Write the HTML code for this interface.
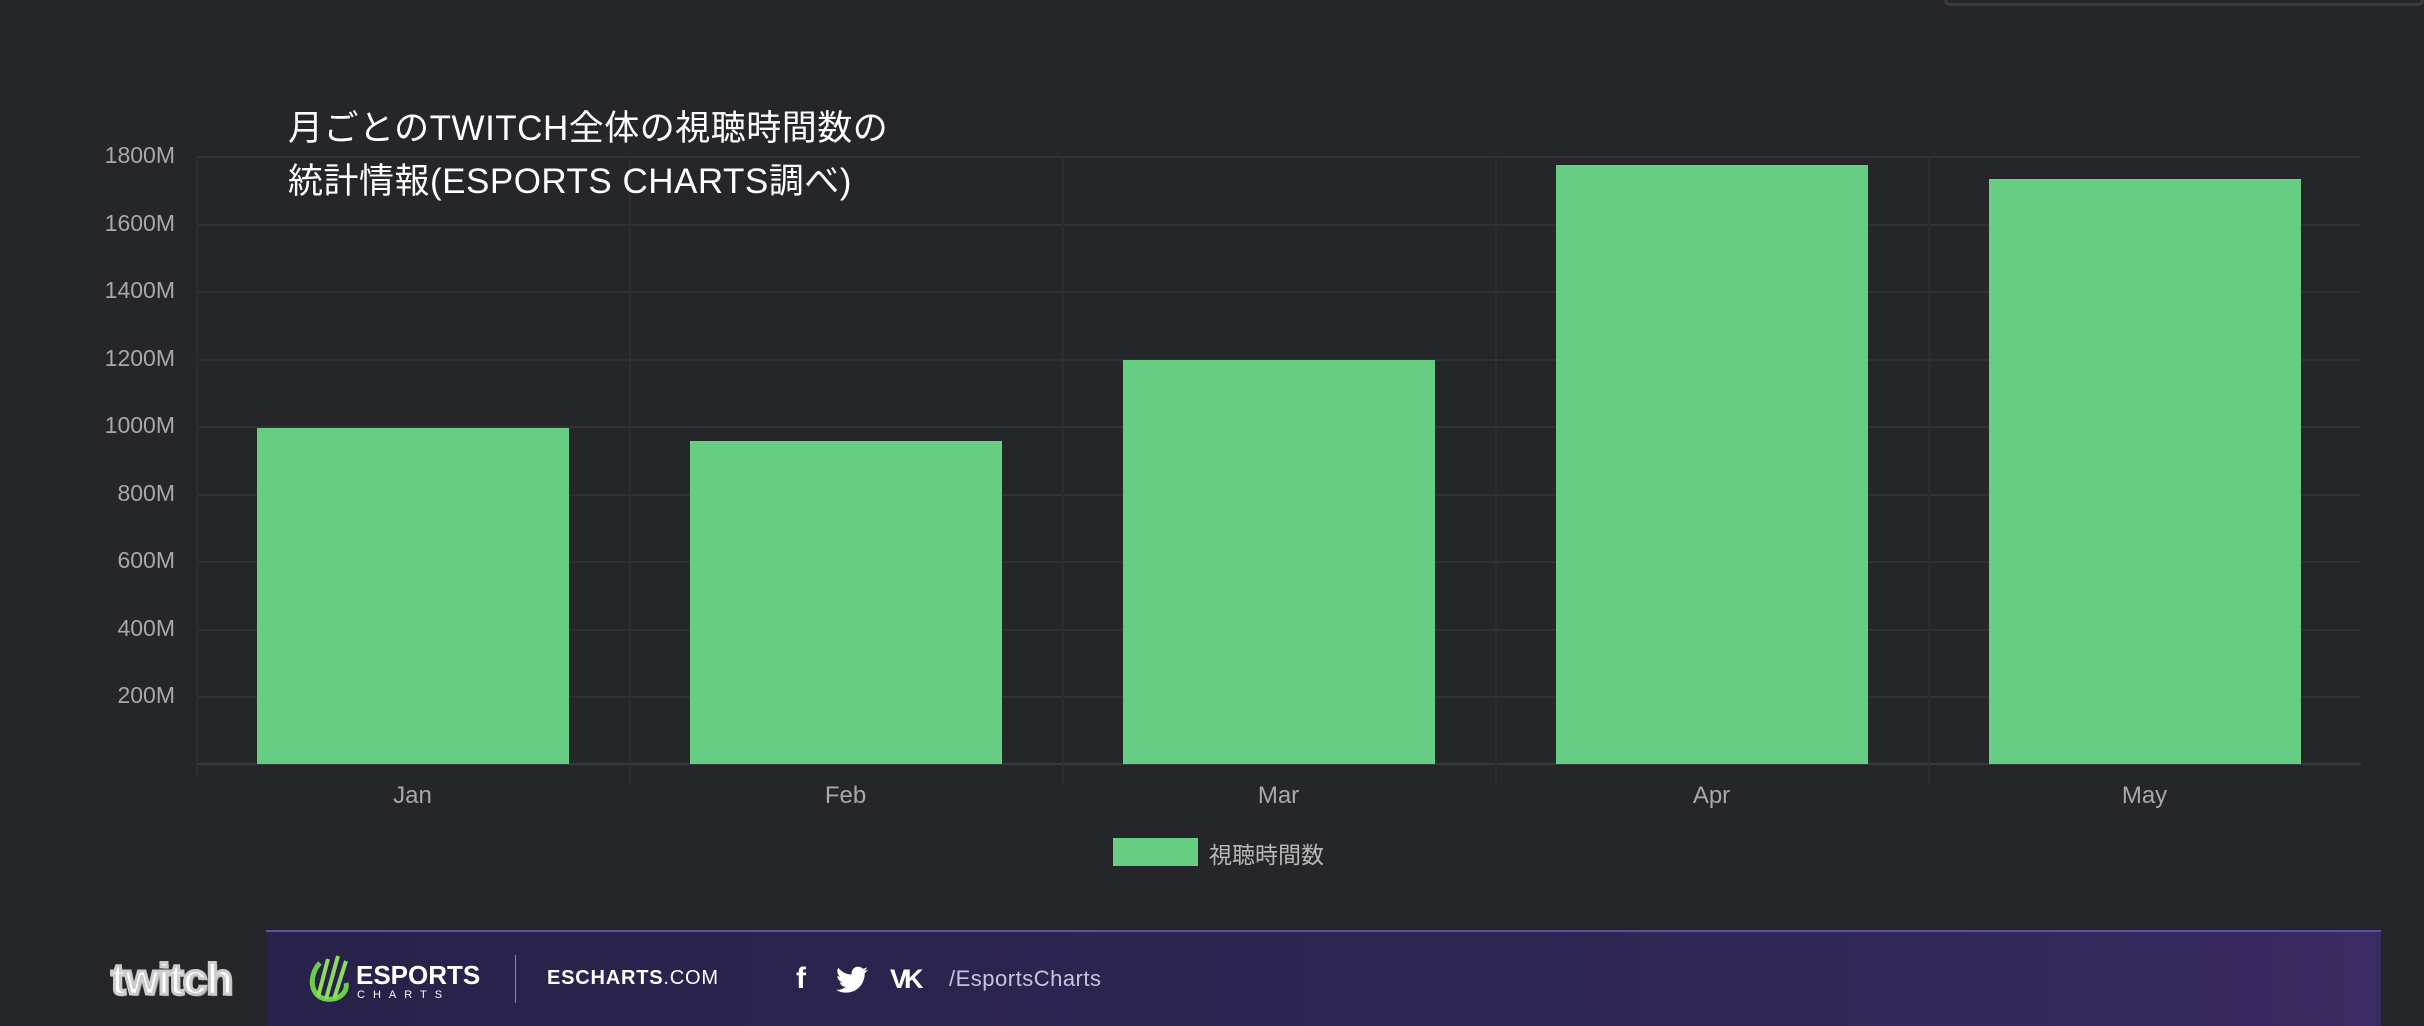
<!DOCTYPE html>
<html><head><meta charset="utf-8"><style>
*{margin:0;padding:0;box-sizing:border-box}
body{width:2424px;height:1026px;background:#252629;position:relative;overflow:hidden;font-family:"Liberation Sans","Noto Sans CJK JP",sans-serif}
.a{position:absolute}
.h{position:absolute;left:196px;width:2165px;height:2px;background:#303134}
.v{position:absolute;top:156px;height:628px;width:2px;background:#2d2e31}
.yl{position:absolute;right:2249px;color:#a8a8a8;font-size:23px;line-height:23px}
.bar{position:absolute;background:#67cd82;width:312px;bottom:262px}
.xl{position:absolute;top:782px;width:433px;text-align:center;color:#a8a8a8;font-size:24px}
</style></head><body>
<div class="a" style="left:1944px;top:-6px;width:480px;height:12px;border:3px solid #3a3b3e;border-radius:6px"></div>
<div class="h" style="top:156px"></div><div class="h" style="top:224px"></div><div class="h" style="top:291px"></div><div class="h" style="top:359px"></div><div class="h" style="top:426px"></div><div class="h" style="top:494px"></div><div class="h" style="top:561px"></div><div class="h" style="top:629px"></div><div class="h" style="top:696px"></div><div class="h" style="top:763px;background:#38393c"></div>
<div class="v" style="left:196px;height:620px"></div><div class="v" style="left:629px"></div><div class="v" style="left:1062px"></div><div class="v" style="left:1495px"></div><div class="v" style="left:1928px"></div>
<div class="yl" style="top:144px">1800M</div><div class="yl" style="top:212px">1600M</div><div class="yl" style="top:279px">1400M</div><div class="yl" style="top:347px">1200M</div><div class="yl" style="top:414px">1000M</div><div class="yl" style="top:482px">800M</div><div class="yl" style="top:549px">600M</div><div class="yl" style="top:617px">400M</div><div class="yl" style="top:684px">200M</div>
<div class="bar" style="left:257px;top:428px"></div>
<div class="bar" style="left:690px;top:441px"></div>
<div class="bar" style="left:1123px;top:360px"></div>
<div class="bar" style="left:1556px;top:165px"></div>
<div class="bar" style="left:1989px;top:179px"></div>
<div class="xl" style="left:196px">Jan</div><div class="xl" style="left:629px">Feb</div><div class="xl" style="left:1062px">Mar</div><div class="xl" style="left:1495px">Apr</div><div class="xl" style="left:1928px">May</div>
<div class="a" style="left:288px;top:102px;color:#fff;font-size:35px;line-height:53px;letter-spacing:0.5px">月ごとのTWITCH全体の視聴時間数の<br>統計情報(ESPORTS CHARTS調べ)</div>
<div class="a" style="left:1113px;top:838px;width:85px;height:28px;background:#67cd82"></div>
<div class="a" style="left:1209px;top:836px;color:#b8b8b8;font-size:23px">視聴時間数</div>
<div class="a" style="left:266px;top:930px;width:2115px;height:96px;background:linear-gradient(90deg,#28224a,#2e2653 60%,#3a2b62);border-top:2px solid #5c4fa0"></div>
<div class="a" style="left:111px;top:956px;color:#fff;font:bold 44px/48px 'Liberation Sans',sans-serif;letter-spacing:-1px;-webkit-text-stroke:3px #ccc;text-shadow:2px 2px 0 #888">twitch</div>
<svg class="a" style="left:306px;top:953px" width="44" height="50" viewBox="0 0 44 50"><path d="M14 10 C2 22 4 44 20 46 C34 48 42 38 40 30" fill="none" stroke="#6bcf4a" stroke-width="5"/><path d="M12 44 L22 6 M20 46 L32 3 M28 46 L40 8" stroke="#8fdc5c" stroke-width="4"/></svg>
<div class="a" style="left:356px;top:961px;color:#fff;font:bold 26px/28px 'Liberation Sans',sans-serif">ESPORTS</div>
<div class="a" style="left:357px;top:989px;color:#fff;font:11px/12px 'Liberation Sans',sans-serif;letter-spacing:8px">CHARTS</div>
<div class="a" style="left:515px;top:955px;width:1px;height:48px;background:#8a84a8"></div>
<div class="a" style="left:547px;top:966px;color:#fff;font:20px/24px 'Liberation Sans',sans-serif;letter-spacing:0.8px"><b>ESCHARTS</b>.COM</div>
<div class="a" style="left:796px;top:962px;color:#fff;font:bold 30px/34px 'Liberation Sans',sans-serif">f</div>
<svg class="a" style="left:836px;top:966px" width="32" height="28" viewBox="0 0 24 20"><path d="M24 2.4a10 10 0 0 1-2.8.8A5 5 0 0 0 23.3.4a10 10 0 0 1-3.1 1.2A4.9 4.9 0 0 0 11.8 6 14 14 0 0 1 1.7.9a4.9 4.9 0 0 0 1.5 6.6A4.9 4.9 0 0 1 1 6.9a4.9 4.9 0 0 0 3.9 4.8 5 5 0 0 1-2.2.1 4.9 4.9 0 0 0 4.6 3.4A9.9 9.9 0 0 1 0 17.3 14 14 0 0 0 7.5 19.5c9.1 0 14-7.5 14-14v-.6A10 10 0 0 0 24 2.4z" fill="#fff"/></svg>
<div class="a" style="left:890px;top:964px;color:#fff;font:bold 27px/30px 'Liberation Sans',sans-serif;letter-spacing:-4px">VK</div>
<div class="a" style="left:949px;top:966px;color:#c8c4dc;font:22px/26px 'Liberation Sans',sans-serif;letter-spacing:0.5px">/EsportsCharts</div>
</body></html>
